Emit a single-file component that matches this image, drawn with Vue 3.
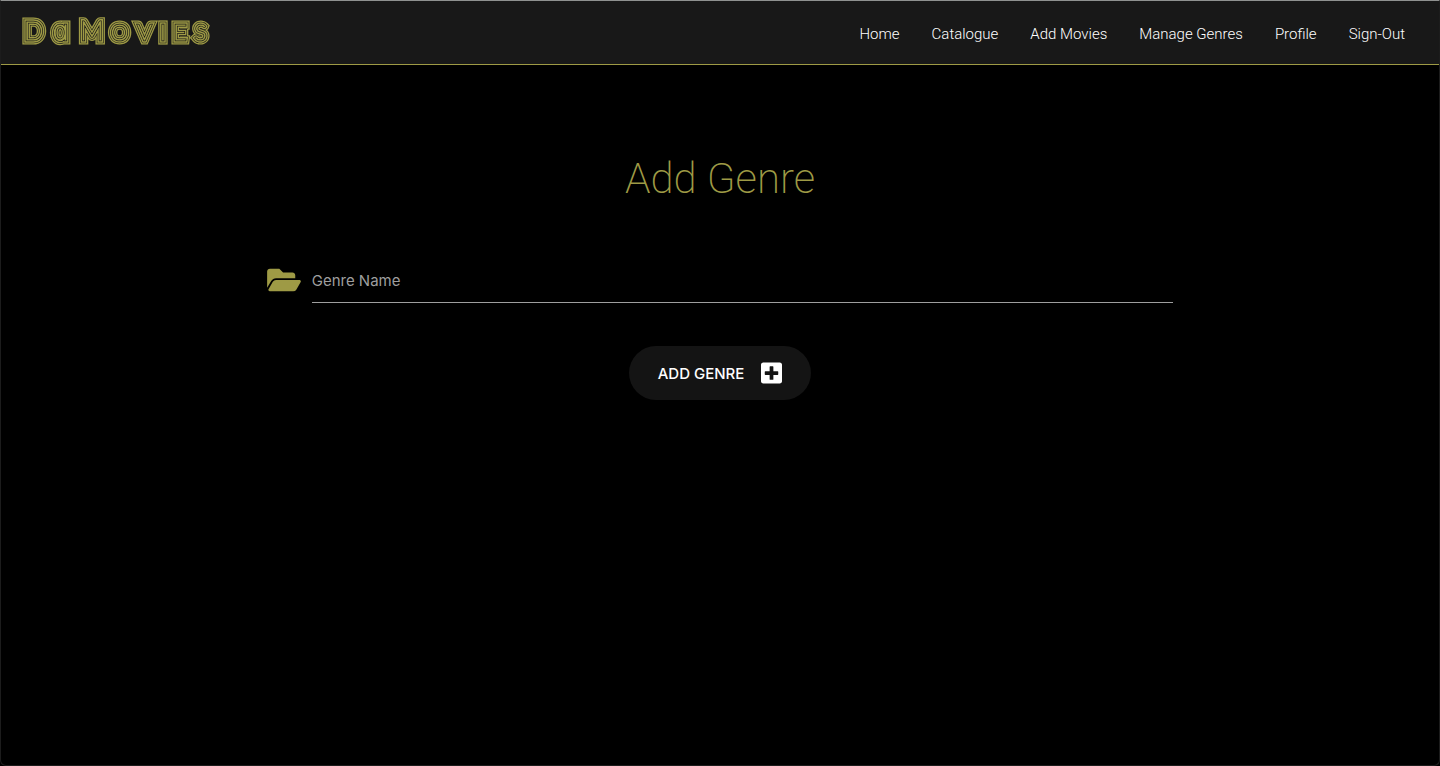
<script setup>
import { ref } from 'vue'

const links = ['Home', 'Catalogue', 'Add Movies', 'Manage Genres', 'Profile', 'Sign-Out']
const genre = ref('')
</script>

<template>
  <div class="page">
    <header class="navbar">
      <a class="brand" href="#" aria-label="Da Movies">
        <svg class="logo" viewBox="0 0 1920 280" aria-hidden="true">
          <defs>
            <text id="wordmark" text-anchor="middle">
              <tspan class="cap" x="128" y="212">D</tspan>
              <tspan class="round" x="396" y="212">a</tspan>
              <tspan class="cap" x="710" y="212">M</tspan>
              <tspan class="small" x="986 1236 1420 1590 1796" y="212">ovies</tspan>
            </text>
          </defs>
          <use href="#wordmark" class="band band-outer" />
          <use href="#wordmark" class="band band-gap" />
          <use href="#wordmark" class="band band-middle" />
          <use href="#wordmark" class="band band-inner-gap" />
          <use href="#wordmark" class="band band-inner" />
        </svg>
      </a>
      <nav class="links">
        <a v-for="link in links" :key="link" href="#">{{ link }}</a>
      </nav>
    </header>

    <main class="content">
      <h1>Add Genre</h1>
      <form class="form" @submit.prevent>
        <div class="field">
          <svg class="folder" viewBox="0 0 576 512" aria-hidden="true">
            <path d="M572.694 292.093L500.27 416.248A63.997 63.997 0 0 1 444.989 448H45.025c-18.523 0-30.064-20.093-20.731-36.093l72.424-124.155A64 64 0 0 1 152 256h399.964c18.523 0 30.064 20.093 20.73 36.093zM152 224h328v-48c0-26.51-21.49-48-48-48H272l-64-64H48C21.49 64 0 85.49 0 112v278.046l69.077-118.418C86.214 242.25 117.989 224 152 224z" />
          </svg>
          <input v-model="genre" type="text" name="genre" aria-label="Genre Name" placeholder="Genre Name" />
        </div>
        <button type="submit">
          ADD GENRE
          <svg class="plus" viewBox="0 0 448 512" aria-hidden="true">
            <path d="M400 32H48C21.5 32 0 53.5 0 80v352c0 26.5 21.5 48 48 48h352c26.5 0 48-21.5 48-48V80c0-26.5-21.5-48-48-48zm-32 252c0 6.6-5.4 12-12 12h-92v92c0 6.6-5.4 12-12 12h-56c-6.6 0-12-5.4-12-12v-92H92c-6.6 0-12-5.4-12-12v-56c0-6.6 5.4-12 12-12h92v-92c0-6.6 5.4-12 12-12h56c6.6 0 12 5.4 12 12v92h92c6.6 0 12 5.4 12 12v56z" />
          </svg>
        </button>
      </form>
    </main>
  </div>
</template>

<style>
body {
  margin: 0;
  background: #000;
}
</style>

<style scoped>
.page {
  box-sizing: border-box;
  min-height: 100vh;
  border: 1px solid #1c1c1c;
  border-top-color: #8f9190;
  border-radius: 0 0 6px 6px;
  background: #000;
  color: #fff;
  font-family: Inter, "Liberation Sans", sans-serif;
}

.navbar {
  display: flex;
  align-items: center;
  justify-content: space-between;
  height: 63px;
  padding: 0 34px 0 20px;
  border-bottom: 1px solid #9e9a45;
  background: #181818;
}

.brand {
  display: flex;
}

.logo {
  width: 192px;
  height: 28px;
  overflow: visible;
  will-change: transform;
}

.cap,
.small {
  font-family: Lato, Inter, sans-serif;
  font-weight: 100;
}

.cap {
  font-size: 256px;
}

.round {
  font-family: Inter, sans-serif;
  font-weight: 100;
  font-size: 270px;
  font-feature-settings: "cv11";
}

.small {
  font-size: 220px;
  text-transform: uppercase;
}

.band {
  stroke-linejoin: miter;
  stroke-miterlimit: 2;
}

.band-outer {
  fill: #9e9a45;
  stroke: #9e9a45;
  stroke-width: 92px;
}

.band-gap {
  fill: #181818;
  stroke: #181818;
  stroke-width: 66px;
}

.band-middle {
  fill: #9e9a45;
  stroke: #9e9a45;
  stroke-width: 54px;
}

.band-inner-gap {
  fill: #181818;
  stroke: #181818;
  stroke-width: 26px;
}

.band-inner {
  fill: #9e9a45;
  stroke: #9e9a45;
  stroke-width: 12px;
}

.links {
  display: flex;
  gap: 32px;
  padding-top: 2px;
}

.links a {
  color: #fff;
  font-family: Roboto, Inter, sans-serif;
  font-size: 15px;
  font-weight: 300;
  line-height: 24px;
  text-decoration: none;
}

.content {
  display: flex;
  flex-direction: column;
  align-items: center;
  padding-top: 86px;
}

h1 {
  margin: 0;
  color: #9e9a45;
  font-family: Roboto, Inter, sans-serif;
  font-size: 42px;
  font-weight: 200;
  line-height: 56px;
}

.form {
  display: flex;
  flex-direction: column;
  align-items: center;
  gap: 43px;
  width: calc(70% - 100px);
  margin-top: 52px;
}

.field {
  display: flex;
  gap: 11px;
  width: 100%;
}

.folder {
  flex: none;
  width: 34px;
  height: 30px;
  margin-top: 6px;
  fill: #9e9a45;
}

input {
  flex: 1;
  min-width: 0;
  height: 44px;
  box-sizing: border-box;
  padding: 0;
  border: 0;
  border-bottom: 1px solid #9e9e9e;
  outline: 0;
  background: transparent;
  color: #fff;
  font: 400 15px Inter, "Liberation Sans", sans-serif;
}

input::placeholder {
  color: #9e9e9e;
  opacity: 1;
}

button {
  display: flex;
  align-items: center;
  gap: 17px;
  height: 54px;
  padding: 0 29px;
  border: 0;
  border-radius: 27px;
  background: #141414;
  color: #fff;
  font: 500 15px Inter, "Liberation Sans", sans-serif;
}

.plus {
  width: 21px;
  height: 24px;
  fill: #fff;
}
</style>
